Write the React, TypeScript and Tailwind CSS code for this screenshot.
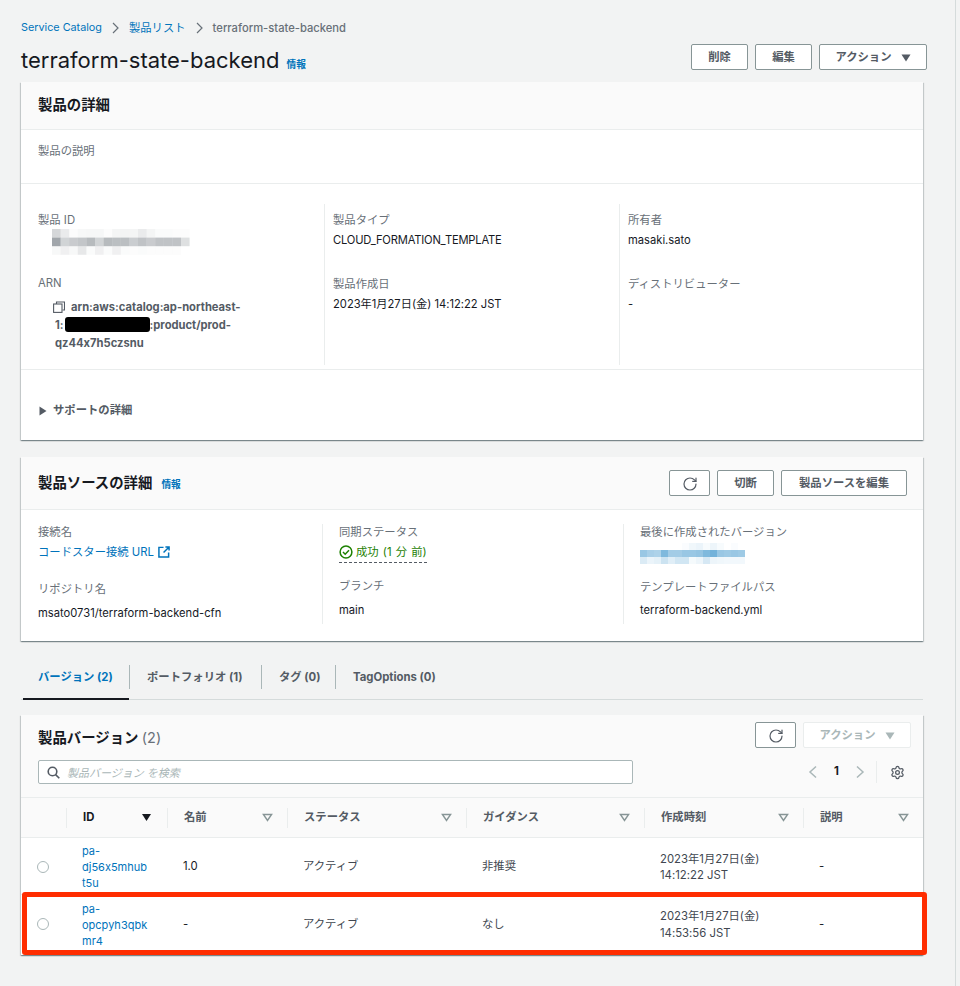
import React from "react";
import { RotateCw, Settings } from "lucide-react";

const Info = ({ className = "" }: { className?: string }) => (
  <span className={`text-[9.7px] font-bold text-[#0073bb] ${className}`}>情報</span>
);

const Btn = ({ children, className = "" }: { children: React.ReactNode; className?: string }) => (
  <div className={`h-[26px] pt-[1px] flex items-center justify-center bg-white border border-[#879596] rounded-[2px] text-[11.34px] font-bold text-[#545b64] ${className}`}>
    {children}
  </div>
);

const Refresh = () => <RotateCw size={16} strokeWidth={1.8} color="#545b64" />;

const Label = ({ children, className = "" }: { children: React.ReactNode; className?: string }) => (
  <div className={`text-[11.34px] leading-[16px] text-[#687078] ${className}`}>{children}</div>
);
const Value = ({ children, className = "" }: { children: React.ReactNode; className?: string }) => (
  <div className={`text-[11.2px] leading-[16px] text-[#16191f] ${className}`}>{children}</div>
);

const Pixels = ({ rows, cell, rgb }: { rows: number[][]; cell: number; rgb: string }) => (
  <svg width={rows[0].length * cell} height={rows.length * cell} className="block">
    {rows.map((r, y) =>
      r.map((o, x) => <rect key={`${x}-${y}`} x={x * cell} y={y * cell} width={cell} height={cell} fill={rgb} opacity={o} />)
    )}
  </svg>
);

const grayRows = [
  [0.28,0.14,0.02,0.05,0.06,0.06,0.02,0.07,0.08,0.07,0.14,0.07,0.03,0.03,0.02,0.02],
  [0.62,0.3,0.36,0.4,0.48,0.3,0.48,0.45,0.45,0.35,0.42,0.36,0.42,0.42,0.42,0.22],
  [0.05,0.1,0.05,0.16,0.03,0.1,0.03,0.1,0.03,0.02,0.03,0.02,0.02,0.02,0.02,0.0],
];
const blueRows = [
  [0.0,0.0,0.0,0.0,0.0,0.0,0.02,0.06,0.08,0.03,0.07,0.03,0.0,0.02,0.0],
  [0.4,0.34,0.32,0.5,0.36,0.36,0.4,0.4,0.42,0.5,0.55,0.4,0.38,0.4,0.38],
  [0.14,0.08,0.1,0.2,0.12,0.18,0.18,0.04,0.07,0.16,0.07,0.06,0.05,0.05,0.05],
];

const SortDown = ({ filled = false }: { filled?: boolean }) => (
  <svg width="11" height="9" viewBox="0 0 11 9">
    {filled ? (
      <path d="M1 1h9L5.5 8z" fill="#16191f" />
    ) : (
      <path d="M1.5 1.6h8L5.5 7.4z" fill="none" stroke="#879596" strokeWidth="1.5" />
    )}
  </svg>
);

const cols = "grid grid-cols-[45px_101px_120px_179px_178px_159px_120px]";

const HeadCell = ({ title, filled }: { title: string; filled?: boolean }) => (
  <div className={`h-[20px] border-l border-[#eaeded] flex items-center justify-between pl-[16px] ${filled ? "pr-[15px]" : "pr-[14px]"}`}>
    <span className={`text-[11.34px] font-bold ${filled ? "text-[#16191f]" : "text-[#545b64]"}`}>{title}</span>
    <SortDown filled={filled} />
  </div>
);

const Radio = () => <div className="w-[12px] h-[12px] rounded-full border border-[#aab7b8] bg-white ml-[16px] -mt-[1px]" />;

const Row = ({ id, name, status, guide, t1, t2, last }: { id: string[]; name: string; status: string; guide: string; t1: string; t2: string; last?: boolean }) => (
  <div className={`${cols} h-[57px] pt-[2px] items-center text-[11.34px] text-[#16191f] ${last ? "" : "border-b border-[#eaeded]"}`}>
    <Radio />
    <div className="pl-[16px] text-[#0073bb] leading-[16px] text-[11px]">
      {id.map((l) => <div key={l}>{l}</div>)}
    </div>
    <div className="pl-[16px]">{name}</div>
    <div className="pl-[16px] text-[#414750]">{status}</div>
    <div className="pl-[16px] text-[#414750]">{guide}</div>
    <div className="pl-[16px] leading-[16.5px] text-[#414750]">
      <div>{t1}</div>
      <div>{t2}</div>
    </div>
    <div className="pl-[16px]">-</div>
  </div>
);

const Chevron = () => (
  <svg width="7" height="12" viewBox="0 0 7 12" fill="none" stroke="#687078" strokeWidth="1.2" className="mx-[10px]">
    <path d="M1 1l5 5-5 5" />
  </svg>
);

const cardShadow = "shadow-[0_1px_1px_0_rgba(0,28,36,0.3),1px_1px_1px_0_rgba(0,28,36,0.15),-1px_1px_1px_0_rgba(0,28,36,0.15)]";

export default function App() {
  return (
    <div className="relative w-[960px] h-[986px] overflow-hidden bg-[#f2f3f3]">
      <div className="h-full w-[956px] border-r border-[#d5dbdb] pl-[21px] font-['Inter','Noto_Sans_CJK_JP',sans-serif] [font-feature-settings:'calt'_0]">
        {/* Breadcrumb */}
        <div className="pt-[20px] h-[36px] flex items-start text-[11.34px] leading-[16px]">
          <span className="text-[#0073bb] text-[10.8px]">Service Catalog</span>
          <div className="h-[16px] flex items-center"><Chevron /></div>
          <span className="text-[#0073bb]">製品リスト</span>
          <div className="h-[16px] flex items-center"><Chevron /></div>
          <span className="text-[#687078] font-medium text-[11.2px]">terraform-state-backend</span>
        </div>

        {/* Title */}
        <div className="w-[906px] h-[46px] flex items-start justify-between">
          <div className="flex items-baseline pt-[8px]">
            <h1 className="text-[22px] leading-[32px] font-normal text-[#16191f]">terraform-state-backend</h1>
            <Info className="ml-[7px]" />
          </div>
          <div className="flex gap-[7px] pt-[8px]">
            <Btn className="w-[57px]">削除</Btn>
            <Btn className="w-[57px]">編集</Btn>
            <Btn className="w-[108px] gap-[9px]">
              アクション
              <svg width="10" height="8" viewBox="0 0 10 8"><path d="M0.5 0.5h9L5 7.5z" fill="#545b64" /></svg>
            </Btn>
          </div>
        </div>

        {/* Card 1 */}
        <section className={`w-[902px] h-[358px] bg-white ${cardShadow}`}>
          <div className="h-[48px] bg-[#fafafa] border-b border-[#eaeded] pl-[17px] pb-[2px] flex items-center">
            <h2 className="text-[14.4px] font-bold text-[#16191f]">製品の詳細</h2>
          </div>
          <div className="h-[54px] border-b border-[#eaeded] pl-[17px] pt-[13px]">
            <Label>製品の説明</Label>
          </div>
          <div className="h-[186px] border-b border-[#eaeded] pt-[20px] grid grid-cols-[303px_295px_304px]">
            <div className="pl-[17px] pt-[8px]">
              <Label>製品 ID</Label>
              <div className="mt-[1px] ml-[14px]"><Pixels rows={grayRows} cell={8.6} rgb="#687078" /></div>
              <Label className="mt-[20px]">ARN</Label>
              <div className="mt-[7px] text-[11.2px] leading-[18px] font-bold text-[#545b64]">
                <div className="flex items-center pl-[15px]">
                  <svg width="12" height="12" viewBox="0 0 12 12" fill="none" stroke="#545b64" strokeWidth="1.1" className="mr-[6px]">
                    <path d="M3.5 3V1h8v8h-2" />
                    <rect x="0.6" y="3" width="8.4" height="8.4" />
                  </svg>
                  arn:aws:catalog:ap-northeast-
                </div>
                <div className="pl-[17px] flex items-center">
                  1:<span className="inline-block w-[85px] h-[15px] bg-black rounded-[3px] ml-[1px]" />:product/prod-
                </div>
                <div className="pl-[17px]">qz44x7h5czsnu</div>
              </div>
            </div>
            <div className="border-l border-[#eaeded] pl-[8px] pt-[8px] h-[161px]">
              <Label>製品タイプ</Label>
              <Value className="mt-[4px] tracking-[-0.2px]">CLOUD_FORMATION_TEMPLATE</Value>
              <Label className="mt-[28px]">製品作成日</Label>
              <Value className="mt-[4px]">2023年1月27日(金) 14:12:22 JST</Value>
            </div>
            <div className="border-l border-[#eaeded] pl-[8px] pt-[8px] h-[161px]">
              <Label>所有者</Label>
              <Value className="mt-[4px]">masaki.sato</Value>
              <Label className="mt-[28px]">ディストリビューター</Label>
              <Value className="mt-[4px]">-</Value>
            </div>
          </div>
          <div className="pl-[18px] pt-[32px] flex items-center text-[11.34px] font-bold text-[#545b64]">
            <svg width="8" height="10" viewBox="0 0 8 10" className="mr-[6px]"><path d="M0.5 0.5L7.5 5 0.5 9.5z" fill="#545b64" /></svg>
            サポートの詳細
          </div>
        </section>

        {/* Card 2 */}
        <section className={`mt-[17px] w-[902px] h-[184px] bg-white ${cardShadow}`}>
          <div className="h-[53px] bg-[#fafafa] border-b border-[#eaeded] pl-[17px] pr-[16px] flex items-center justify-between">
            <div className="flex items-baseline">
              <h2 className="text-[14.4px] font-bold text-[#16191f]">製品ソースの詳細</h2>
              <Info className="ml-[9px]" />
            </div>
            <div className="flex gap-[7px]">
              <Btn className="w-[41px]"><Refresh /></Btn>
              <Btn className="w-[57px]">切断</Btn>
              <Btn className="w-[126px]">製品ソースを編集</Btn>
            </div>
          </div>
          <div className="pt-[14px] grid grid-cols-[301px_301px_300px]">
            <div className="pl-[17px]">
              <Label>接続名</Label>
              <div className="mt-[4px] flex items-center gap-[4px] text-[11.34px] leading-[16px] text-[#0073bb]">
                コードスター接続 URL
                <svg width="12" height="12" viewBox="0 0 13 13" fill="none" stroke="#0073bb" strokeWidth="1.6">
                  <path d="M6 1.5H1v10.5h10.5V7" />
                  <path d="M8 1h4v4M12 1L6 7" />
                </svg>
              </div>
              <Label className="mt-[21px]">リポジトリ名</Label>
              <Value className="mt-[8px]">msato0731/terraform-backend-cfn</Value>
            </div>
            <div className="border-l border-[#eaeded] pl-[16px] h-[100px]">
              <Label>同期ステータス</Label>
              <div className="mt-[4px] inline-flex items-center gap-[3px] text-[11.34px] leading-[16px] text-[#1d8102] border-b border-dashed border-[#545b64] pb-[2px] [word-spacing:1px]">
                <svg width="14" height="14" viewBox="0 0 14 14" fill="none" stroke="#1d8102" strokeWidth="1.5">
                  <circle cx="7" cy="7" r="5.9" />
                  <path d="M4 7l2.2 2.2L10 5.2" />
                </svg>
                成功 (1 分 前)
              </div>
              <Label className="mt-[13px]">ブランチ</Label>
              <Value className="mt-[8px]">main</Value>
            </div>
            <div className="border-l border-[#eaeded] pl-[16px] h-[100px]">
              <Label>最後に作成されたバージョン</Label>
              <div className="mt-[3px]"><Pixels rows={blueRows} cell={7} rgb="#0073bb" /></div>
              <Label className="mt-[15px]">テンプレートファイルパス</Label>
              <Value className="mt-[7px]">terraform-backend.yml</Value>
            </div>
          </div>
        </section>

        {/* Tabs */}
        <div className="mt-[19px] w-[902px] h-[40px] border-b border-[#d5dbdb] flex text-[11.34px] font-bold text-[#545b64]">
          <div className="ml-[2px] w-[106px] h-[40px] border-b-2 border-[#16191f] flex items-start pl-[15px] pt-[9px] text-[#0073bb]">バージョン (2)</div>
          <div className="h-[24px] mt-[5px] w-[132px] border-l border-[#aab7b8] pl-[17px] pt-[4px]">ポートフォリオ (1)</div>
          <div className="h-[24px] mt-[5px] w-[74px] border-l border-[#aab7b8] pl-[17px] pt-[4px]">タグ (0)</div>
          <div className="h-[24px] mt-[5px] border-l border-[#aab7b8] pl-[17px] pt-[4px]">TagOptions (0)</div>
        </div>

        {/* Card 3 */}
        <section className={`mt-[15px] w-[902px] h-[240px] bg-white ${cardShadow}`}>
          <div className="h-[83px] bg-[#fafafa] border-b border-[#eaeded] pl-[17px] pr-[12px] pt-[7px]">
            <div className="flex items-center justify-between h-[26px]">
              <h2 className="text-[14.4px] font-bold text-[#16191f] pt-[6px]">
                製品バージョン <span className="font-normal text-[#687078]">(2)</span>
              </h2>
              <div className="flex gap-[7px]">
                <Btn className="w-[41px]"><Refresh /></Btn>
                <Btn className="w-[108px] gap-[9px] border-[#eaeded] text-[#aab7b8]">
                  アクション
                  <svg width="10" height="8" viewBox="0 0 10 8"><path d="M0.5 0.5h9L5 7.5z" fill="#aab7b8" /></svg>
                </Btn>
              </div>
            </div>
            <div className="flex items-center justify-between mt-[12px] h-[24px]">
              <div className="w-[595px] h-[24px] bg-white border border-[#aab7b8] rounded-[2px] flex items-center pl-[8px] gap-[7px]">
                <svg width="13" height="13" viewBox="0 0 13 13" fill="none" stroke="#545b64" strokeWidth="1.6">
                  <circle cx="5.5" cy="5.5" r="4.3" />
                  <path d="M8.6 8.6L12.3 12.3" />
                </svg>
                <span className="italic text-[11px] text-[#aab7b8] pt-[2px]">製品バージョン を検索</span>
              </div>
              <div className="flex items-center h-[22px]">
                <svg width="10" height="14" viewBox="0 0 10 14" fill="none" stroke="#aab7b8" strokeWidth="1.5"><path d="M8 1.5L2 7l6 5.5" /></svg>
                <span className="mx-[16px] text-[11.34px] font-bold text-[#16191f]">1</span>
                <svg width="10" height="14" viewBox="0 0 10 14" fill="none" stroke="#aab7b8" strokeWidth="1.5"><path d="M2 1.5L8 7l-6 5.5" /></svg>
                <div className="h-[22px] border-l border-[#eaeded] ml-[11px] mr-[13px]" />
                <Settings size={15} strokeWidth={2} color="#545b64" className="mr-[6px]" />
              </div>
            </div>
          </div>
          <div className={`${cols} h-[40px] items-center bg-[#fafafa] border-b border-[#eaeded]`}>
            <div />
            <HeadCell title="ID" filled />
            <HeadCell title="名前" />
            <HeadCell title="ステータス" />
            <HeadCell title="ガイダンス" />
            <HeadCell title="作成時刻" />
            <HeadCell title="説明" />
          </div>
          <Row id={["pa-", "dj56x5mhub", "t5u"]} name="1.0" status="アクティブ" guide="非推奨" t1="2023年1月27日(金)" t2="14:12:22 JST" />
          <Row id={["pa-", "opcpyh3qbk", "mr4"]} name="-" status="アクティブ" guide="なし" t1="2023年1月27日(金)" t2="14:53:56 JST" last />
        </section>
      </div>

      {/* Red annotation rectangle */}
      <div className="absolute left-[22px] top-[892px] w-[905px] h-[63px] border-[5px] border-[#ff2d00] rounded-[3px]" />
    </div>
  );
}
